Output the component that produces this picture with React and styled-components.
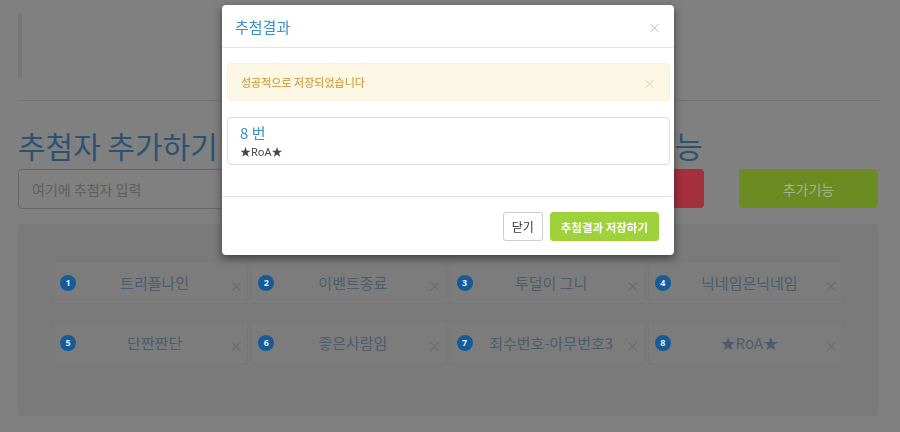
import React from "react";
import styled, { createGlobalStyle } from "styled-components";

const GlobalStyle = createGlobalStyle`
  html, body {
    margin: 0;
    padding: 0;
    background: #808080;
    font-family: "Noto Sans", "Noto Sans CJK KR", sans-serif;
  }
  * { box-sizing: border-box; }
`;

const players = [
  { no: 1, name: "트리플나인" },
  { no: 2, name: "이벤트종료" },
  { no: 3, name: "투덜이 그니" },
  { no: 4, name: "닉네임은닉네임" },
  { no: 5, name: "단짠짠단" },
  { no: 6, name: "좋은사람임" },
  { no: 7, name: "죄수번호-아무번호3" },
  { no: 8, name: "★RoA★" },
];

// 뒤쪽 페이지 (모달 뒤에서 어둡게 보이는 부분)
function Page() {
  return (
    <PageWrap>
      <Quote />
      <Divider />
      <Heading>추첨자 추가하기 / 삭제하기 / 랜덤 추첨하기 및 추가기능</Heading>
      <FormRow>
        <NameInput placeholder="여기에 추첨자 입력" readOnly />
        <FormButton $variant="red">추첨하기</FormButton>
        <FormButton $variant="green">추가기능</FormButton>
      </FormRow>
      <Board>
        <PlayerGrid>
          {players.map((p) => (
            <PlayerCard key={p.no}>
              <Badge>{p.no}</Badge>
              <PlayerName>{p.name}</PlayerName>
              <RemoveMark>×</RemoveMark>
            </PlayerCard>
          ))}
        </PlayerGrid>
      </Board>
    </PageWrap>
  );
}

function ResultModal() {
  return (
    <Dialog>
      <DialogHeader>
        <DialogTitle>추첨결과</DialogTitle>
        <CloseMark>×</CloseMark>
      </DialogHeader>
      <DialogBody>
        <Alert>
          <span>성공적으로 저장되었습니다</span>
          <AlertClose>×</AlertClose>
        </Alert>
        <ResultBox>
          <ResultNumber>8 번</ResultNumber>
          <ResultName>★RoA★</ResultName>
        </ResultBox>
      </DialogBody>
      <DialogFooter>
        <ModalButton>닫기</ModalButton>
        <ModalButton $primary>추첨결과 저장하기</ModalButton>
      </DialogFooter>
    </Dialog>
  );
}

export default function App() {
  return (
    <>
      <GlobalStyle />
      <Page />
      <ResultModal />
    </>
  );
}

const PageWrap = styled.div`
  width: 900px;
  height: 432px;
  padding: 13px 22px 0 18px;
  overflow: hidden;
`;

const Quote = styled.div`
  height: 65px;
  border-left: 4px solid #767676;
`;

const Divider = styled.div`
  margin: 22px -2px 0 0;
  border-top: 1px solid #747474;
`;

const Heading = styled.h1`
  margin: 24px 0 4px;
  font-size: 30px;
  line-height: 40px;
  font-weight: 400;
  color: #2c5273;
  white-space: nowrap;
  font-family: "Noto Sans CJK KR", sans-serif;
`;

const FormRow = styled.div`
  display: flex;
  gap: 35px;
  height: 40px;
`;

const NameInput = styled.input`
  flex: 1;
  height: 40px;
  padding: 0 13px;
  border: 1px solid #686868;
  border-radius: 4px;
  background: #808080;
  font-size: 14px;
  font-family: "Noto Sans CJK KR", sans-serif;
  &::placeholder { color: #5e5e5e; }
`;

const FormButton = styled.div`
  width: 139px;
  height: 39px;
  border-radius: 4px;
  display: flex;
  align-items: center;
  justify-content: center;
  font-size: 14px;
  font-family: "Noto Sans CJK KR", sans-serif;
  background: ${(p) => (p.$variant === "red" ? "#a3303c" : "#6b8c22")};
  color: ${(p) => (p.$variant === "red" ? "#c99098" : "#a4b58a")};
`;

const Board = styled.div`
  margin-top: 15px;
  height: 192px;
  background: #7a7a7a;
  border-radius: 4px;
  padding: 37px 35px;
`;

const PlayerGrid = styled.div`
  display: grid;
  grid-template-columns: repeat(4, 1fr);
  column-gap: 3px;
  row-gap: 17px;
`;

const PlayerCard = styled.div`
  height: 43px;
  display: flex;
  align-items: center;
  padding: 0 6px;
  background: #7c7c7c;
  border: 1px solid #777;
  font-family: "Noto Sans CJK KR", sans-serif;
`;

const Badge = styled.span`
  width: 16px;
  height: 16px;
  border-radius: 50%;
  background: #165a98;
  color: #e2eaf2;
  font-size: 9px;
  font-weight: 700;
  display: flex;
  align-items: center;
  justify-content: center;
  font-family: "Noto Sans", sans-serif;
  flex-shrink: 0;
`;

const PlayerName = styled.span`
  flex: 1;
  text-align: center;
  font-size: 15px;
  color: #4b5c6c;
  white-space: nowrap;
  padding-left: 4px;
`;

const RemoveMark = styled.span`
  font-size: 14px;
  color: #6a6a6a;
  margin-top: 5px;
  width: 12px;
  text-align: center;
`;

const Dialog = styled.div`
  position: fixed;
  top: 5px;
  left: 222px;
  width: 452px;
  background: #fff;
  border-radius: 4px;
  box-shadow: 0 3px 9px rgba(0, 0, 0, 0.5);
  font-family: "Noto Sans CJK KR", sans-serif;
`;

const DialogHeader = styled.div`
  height: 43px;
  padding: 0 13px;
  display: flex;
  align-items: center;
  justify-content: space-between;
  border-bottom: 1px solid #e5e5e5;
`;

const DialogTitle = styled.h4`
  margin: 0;
  font-size: 15px;
  font-weight: 400;
  color: #3b8fc7;
`;

const CloseMark = styled.span`
  font-size: 13px;
  color: #c4c4c4;
`;

const DialogBody = styled.div`
  padding: 15px 4px 31px 5px;
  border-bottom: 1px solid #e5e5e5;
`;

const Alert = styled.div`
  height: 38px;
  padding: 0 13px;
  display: flex;
  align-items: center;
  justify-content: space-between;
  background: #fdf7e6;
  border: 1px solid #fbf0da;
  border-radius: 4px;
  font-size: 11px;
  font-weight: 500;
  color: #d6a548;
`;

const AlertClose = styled.span`
  font-size: 13px;
  color: #ecdcb4;
`;

const ResultBox = styled.div`
  margin-top: 16px;
  height: 48px;
  padding: 4px 12px;
  border: 1px solid #ddd;
  border-radius: 4px;
`;

const ResultNumber = styled.div`
  font-size: 15px;
  line-height: 22px;
  color: #3b8fc7;
`;

const ResultName = styled.div`
  font-size: 11px;
  line-height: 16px;
  color: #444;
  font-family: "Noto Sans", "Noto Sans CJK KR", sans-serif;
`;

const DialogFooter = styled.div`
  display: flex;
  justify-content: flex-end;
  gap: 7px;
  padding: 15px 15px 14px;
`;

const ModalButton = styled.div`
  height: 29px;
  padding: 0 ${(p) => (p.$primary ? "10px" : "8px")};
  display: flex;
  align-items: center;
  border-radius: 3px;
  font-size: ${(p) => (p.$primary ? "11.5px" : "12px")};
  font-weight: ${(p) => (p.$primary ? 700 : 400)};
  background: ${(p) => (p.$primary ? "#9fd23a" : "#fff")};
  color: ${(p) => (p.$primary ? "#fff" : "#333")};
  border: 1px solid ${(p) => (p.$primary ? "#9fd23a" : "#ccc")};
`;
